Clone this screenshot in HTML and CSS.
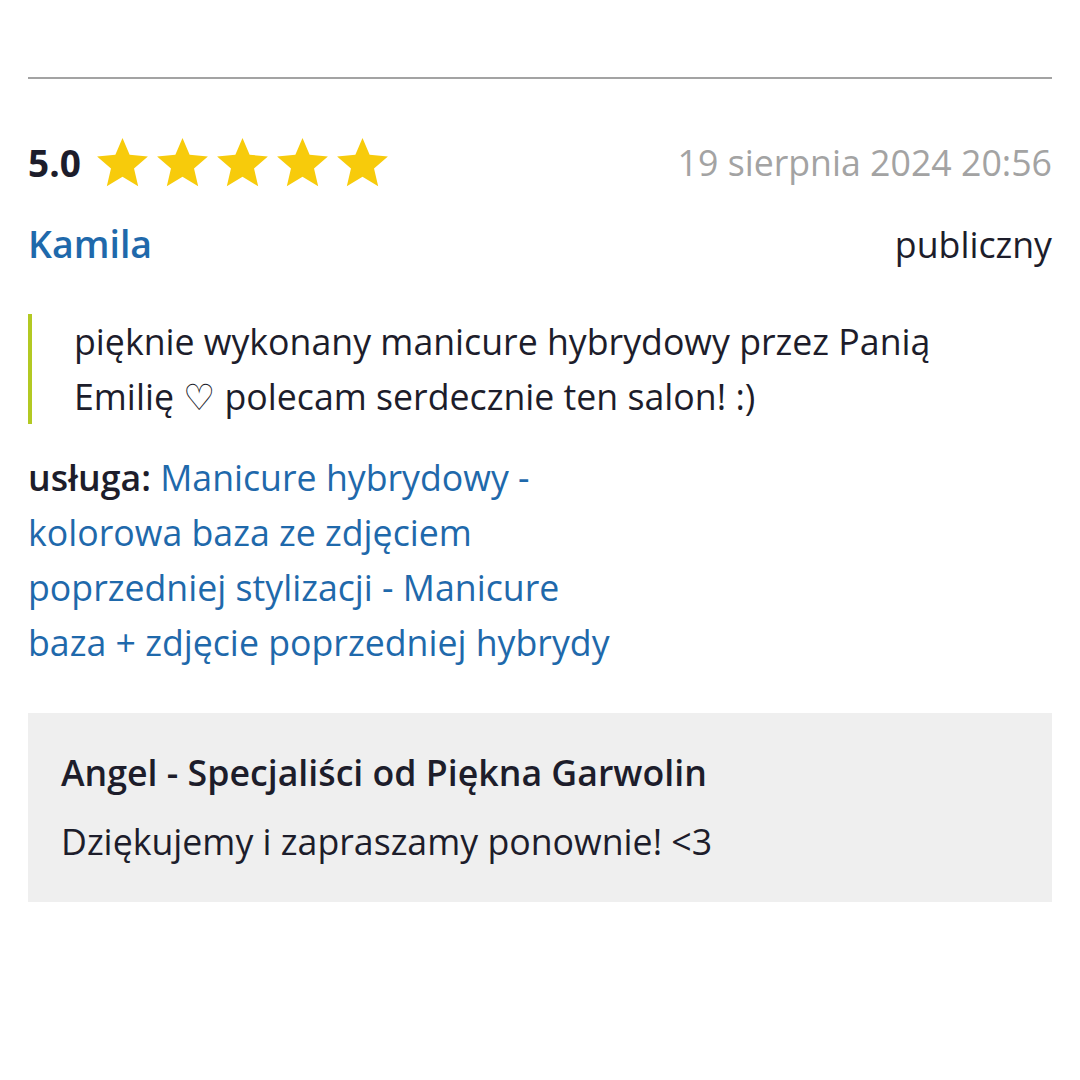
FILE: index.html
```html
<!DOCTYPE html>
<html lang="pl">
<head>
    <meta charset="UTF-8">
    <meta name="viewport" content="width=device-width, initial-scale=1.0">
    <title>Opinia</title>
    <link rel="stylesheet" href="styles.css">
</head>
<body>
    <div class="review">
        <div class="review-head">
            <div class="rating">
                <span class="score">5.0</span>
                <span class="stars">
                    <svg class="star" viewBox="2 2 20 19.3"><path d="M12 17.27L18.18 21l-1.64-7.03L22 9.24l-7.19-.61L12 2 9.19 8.63 2 9.24l5.46 4.73L5.82 21z"/></svg>
                    <svg class="star" viewBox="2 2 20 19.3"><path d="M12 17.27L18.18 21l-1.64-7.03L22 9.24l-7.19-.61L12 2 9.19 8.63 2 9.24l5.46 4.73L5.82 21z"/></svg>
                    <svg class="star" viewBox="2 2 20 19.3"><path d="M12 17.27L18.18 21l-1.64-7.03L22 9.24l-7.19-.61L12 2 9.19 8.63 2 9.24l5.46 4.73L5.82 21z"/></svg>
                    <svg class="star" viewBox="2 2 20 19.3"><path d="M12 17.27L18.18 21l-1.64-7.03L22 9.24l-7.19-.61L12 2 9.19 8.63 2 9.24l5.46 4.73L5.82 21z"/></svg>
                    <svg class="star" viewBox="2 2 20 19.3"><path d="M12 17.27L18.18 21l-1.64-7.03L22 9.24l-7.19-.61L12 2 9.19 8.63 2 9.24l5.46 4.73L5.82 21z"/></svg>
                </span>
            </div>
            <div class="date">19 sierpnia 2024 20:56</div>
        </div>

        <div class="review-author">
            <a class="author" href="#">Kamila</a>
            <span class="visibility">publiczny</span>
        </div>

        <blockquote class="review-text">
            pięknie wykonany manicure hybrydowy przez Panią Emilię ♡ polecam serdecznie ten salon! :)
        </blockquote>

        <div class="service">
            <strong>usługa:</strong> <a href="#">Manicure hybrydowy - kolorowa baza ze zdjęciem poprzedniej stylizacji - Manicure baza + zdjęcie poprzedniej hybrydy</a>
        </div>

        <div class="reply">
            <div class="reply-title">Angel - Specjaliści od Piękna Garwolin</div>
            <div class="reply-text">Dziękujemy i zapraszamy ponownie! &lt;3</div>
        </div>
    </div>
</body>
</html>
```

FILE: styles.css
```css
body {
    margin: 0;
    background-color: #fff;
    font-family: 'Open Sans', 'Noto Sans', sans-serif;
    color: #1d1d2b;
    font-size: 35.7px;
    line-height: 55px;
}

a {
    color: #1f69ab;
    text-decoration: none;
}

.review {
    margin: 0 28px;
    padding-top: 77px;
}

.review-head {
    display: flex;
    justify-content: space-between;
    align-items: center;
    border-top: 2px solid #a3a3a3;
    padding-top: 56px;
}

.rating {
    display: flex;
    align-items: center;
}

.score {
    font-weight: 700;
    font-size: 37px;
    margin-right: 16px;
}

.stars {
    display: flex;
    gap: 9px;
}

.star {
    width: 51px;
    height: 49px;
    fill: #f7cb0b;
}

.date {
    color: #a3a3a3;
}

.review-author {
    display: flex;
    justify-content: space-between;
    align-items: baseline;
    margin-top: 26px;
}

.author {
    font-weight: 600;
    font-size: 37.5px;
}

.review-text {
    margin: 42px 0 0;
    padding: 0 60px 0 42px;
    border-left: 4px solid #b3c923;
}

.service {
    margin-top: 26px;
    width: 600px;
}

.service strong {
    font-weight: 600;
}

.reply {
    margin-top: 43px;
    background-color: #efefef;
    padding: 32px 33px 33px;
}

.reply-title {
    font-weight: 600;
    margin-bottom: 14px;
}
```
